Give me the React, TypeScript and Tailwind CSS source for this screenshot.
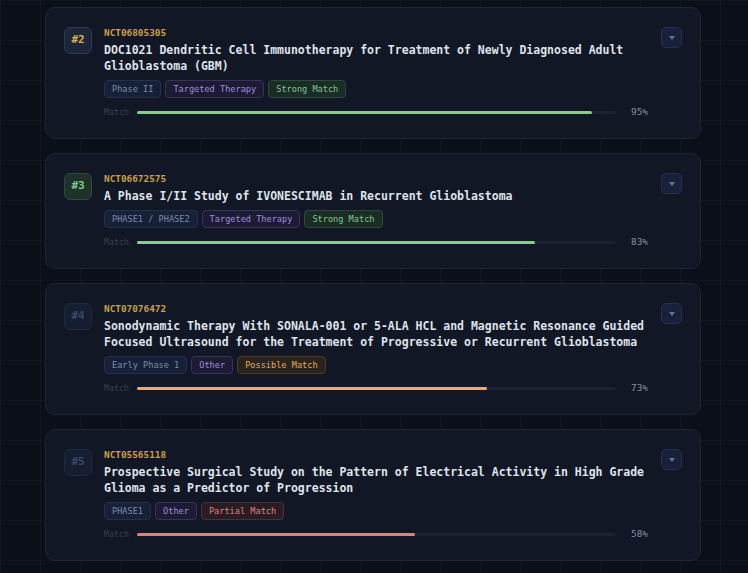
import React from 'react'

type Tone = 'amber' | 'green' | 'dim'
type TagKind = 'phase' | 'purple' | 'strong' | 'possible' | 'partial'

interface Trial {
  rank: number
  tone: Tone
  nct: string
  title: string
  tags: { label: string; kind: TagKind }[]
  score: number
  bar: 'green' | 'amber' | 'red'
}

const trials: Trial[] = [
  {
    rank: 2,
    tone: 'amber',
    nct: 'NCT06805305',
    title: 'DOC1021 Dendritic Cell Immunotherapy for Treatment of Newly Diagnosed Adult Glioblastoma (GBM)',
    tags: [
      { label: 'Phase II', kind: 'phase' },
      { label: 'Targeted Therapy', kind: 'purple' },
      { label: 'Strong Match', kind: 'strong' },
    ],
    score: 95,
    bar: 'green',
  },
  {
    rank: 3,
    tone: 'green',
    nct: 'NCT06672575',
    title: 'A Phase I/II Study of IVONESCIMAB in Recurrent Glioblastoma',
    tags: [
      { label: 'PHASE1 / PHASE2', kind: 'phase' },
      { label: 'Targeted Therapy', kind: 'purple' },
      { label: 'Strong Match', kind: 'strong' },
    ],
    score: 83,
    bar: 'green',
  },
  {
    rank: 4,
    tone: 'dim',
    nct: 'NCT07076472',
    title:
      'Sonodynamic Therapy With SONALA-001 or 5-ALA HCL and Magnetic Resonance Guided Focused Ultrasound for the Treatment of Progressive or Recurrent Glioblastoma',
    tags: [
      { label: 'Early Phase 1', kind: 'phase' },
      { label: 'Other', kind: 'purple' },
      { label: 'Possible Match', kind: 'possible' },
    ],
    score: 73,
    bar: 'amber',
  },
  {
    rank: 5,
    tone: 'dim',
    nct: 'NCT05565118',
    title: 'Prospective Surgical Study on the Pattern of Electrical Activity in High Grade Glioma as a Predictor of Progression',
    tags: [
      { label: 'PHASE1', kind: 'phase' },
      { label: 'Other', kind: 'purple' },
      { label: 'Partial Match', kind: 'partial' },
    ],
    score: 58,
    bar: 'red',
  },
]

const rankStyles: Record<Tone, string> = {
  amber: 'bg-[#1c2639] border-[#2d3953] text-[#d6ad52]',
  green: 'bg-[#1e3229] border-[#2e4a3b] text-[#7fcb8c]',
  dim: 'bg-[#151d31] border-[#1f2943] text-[#3c4966]',
}

const tagStyles: Record<TagKind, string> = {
  phase: 'bg-[#162036] border-[#243050] text-[#7c8bab]',
  purple: 'bg-[#1d1b34] border-[#363259] text-[#9d8ddb]',
  strong: 'bg-[#1a2c25] border-[#2b4a3a] text-[#80c690]',
  possible: 'bg-[#29231b] border-[#4a3c28] text-[#e2aa62]',
  partial: 'bg-[#2a1c23] border-[#4c2f37] text-[#e2807f]',
}

const barStyles = {
  green: 'bg-[#7fd08c]',
  amber: 'bg-[#eaae5e]',
  red: 'bg-[#e27f7e]',
}

function TrialCard({ trial }: { trial: Trial }) {
  return (
    <div className="rounded-[10px] border border-[#1e2535] bg-[#121725] px-[18px] pt-[19px] pb-[20px] flex gap-[12px]">
      <div
        className={`w-[28px] h-[27px] shrink-0 rounded-[6px] border flex items-center justify-center text-[11px] font-bold ${rankStyles[trial.tone]}`}
      >
        #{trial.rank}
      </div>
      <div className="flex-1 min-w-0">
        <div className="h-[12px] leading-[12px] text-[9.4px] font-bold text-[#c9a040]">{trial.nct}</div>
        <div className="mt-[3px] text-[11.5px] leading-[16px] font-bold text-[#dfe3eb]">{trial.title}</div>
        <div className="mt-[6px] flex gap-[4px]">
          {trial.tags.map(tag => (
            <span
              key={tag.label}
              className={`h-[18px] px-[7px] rounded-[4px] border flex items-center text-[8.6px] leading-none ${tagStyles[tag.kind]}`}
            >
              {tag.label}
            </span>
          ))}
        </div>
        <div className="mt-[9px] h-[11px] flex items-center">
          <span className="w-[25px] text-[8.3px] text-[#363f53]">Match</span>
          <div className="ml-[8px] flex-1 h-[3px] rounded-full bg-[#1b2236]">
            <div className={`h-full rounded-full ${barStyles[trial.bar]}`} style={{ width: `${trial.score}%` }} />
          </div>
          <span className="ml-[15px] w-[18px] text-[9.4px] text-[#8790a5]">{trial.score}%</span>
        </div>
      </div>
      <div className="w-[21px] h-[21px] shrink-0 rounded-[5px] border border-[#253050] bg-[#19213a] flex items-center justify-center">
        <svg width="6" height="4" viewBox="0 0 6 4">
          <polygon points="0,0 6,0 3,4" fill="#6a7592" />
        </svg>
      </div>
    </div>
  )
}

export default function App() {
  return (
    <div
      className="min-h-[573px] bg-[#0b0f1a] bg-[linear-gradient(rgba(255,255,255,0.025)_1px,transparent_1px),linear-gradient(90deg,rgba(255,255,255,0.025)_1px,transparent_1px)] bg-[size:40px_40px] pt-[7px] pl-[45px] pr-[47px] pb-[12px]"
      style={{ fontFamily: '"DejaVu Sans Mono", "Liberation Mono", monospace' }}
    >
      <div className="flex flex-col gap-[14px]">
        {trials.map(t => (
          <TrialCard key={t.nct} trial={t} />
        ))}
      </div>
    </div>
  )
}
